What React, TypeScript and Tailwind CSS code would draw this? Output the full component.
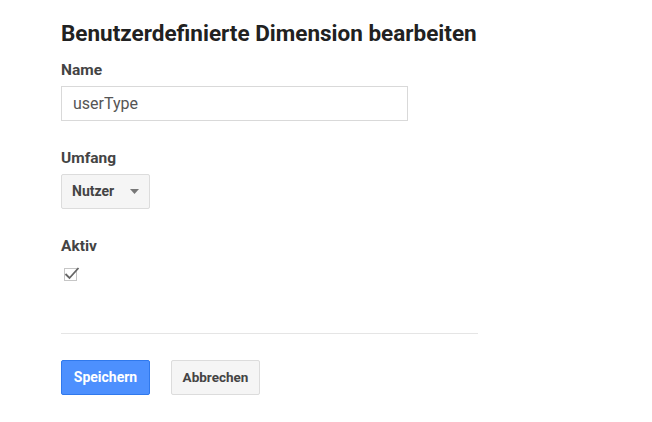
import React from 'react';

const App: React.FC = () => {
  return (
    <div className="min-h-screen w-full bg-white font-['Roboto',sans-serif] text-[#333]">
      <div className="w-[417px] ml-[61px] pt-[21px]">
        <h1 className="text-[22.5px] leading-[24px] font-bold text-[#212121]">
          Benutzerdefinierte Dimension bearbeiten
        </h1>

        <div className="mt-[16px]">
          <label className="block text-[15.5px] leading-[18px] font-bold text-[#444]">Name</label>
          <input
            type="text"
            defaultValue="userType"
            className="mt-[7px] block w-[347px] h-[35px] border border-[#d9d9d9] px-[11px] text-[16px] text-[#555] outline-none"
          />
        </div>

        <div className="mt-[28px]">
          <label className="block text-[15.5px] leading-[18px] font-bold text-[#444]">Umfang</label>
          <button
            type="button"
            className="mt-[7px] flex items-center w-[89px] h-[35px] rounded-[2px] border border-[#dcdcdc] bg-[#f5f5f5] pl-[10px] pr-[10px] text-[14px] font-bold text-[#444]"
          >
            <span>Nutzer</span>
            <svg className="ml-auto" width="9" height="5" viewBox="0 0 9 5">
              <path d="M0 0 L9 0 L4.5 5 Z" fill="#777" />
            </svg>
          </button>
        </div>

        <div className="mt-[28px]">
          <label className="block text-[15.5px] leading-[18px] font-bold text-[#444]">Aktiv</label>
          <div className="relative mt-[13px] ml-[3px] w-[13px] h-[13px] border border-[#c6c6c6] bg-white">
            <svg className="absolute left-[-2px] top-[-4px]" width="17" height="16" viewBox="0 0 17 16">
              <path d="M2.5 9 L6.5 13 L15.5 3" fill="none" stroke="#666" strokeWidth="1.8" />
            </svg>
          </div>
        </div>

        <div className="mt-[52px] h-px bg-[#e5e5e5]" />

        <div className="mt-[26px] flex gap-[21px]">
          <button
            type="button"
            className="w-[89px] h-[35px] rounded-[2px] border border-[#3079ed] bg-[#4d90fe] text-[14px] font-bold text-white"
          >
            Speichern
          </button>
          <button
            type="button"
            className="w-[89px] h-[35px] rounded-[2px] border border-[#dcdcdc] bg-[#f5f5f5] text-[13.5px] font-bold text-[#444]"
          >
            Abbrechen
          </button>
        </div>
      </div>
    </div>
  );
};

export default App;
